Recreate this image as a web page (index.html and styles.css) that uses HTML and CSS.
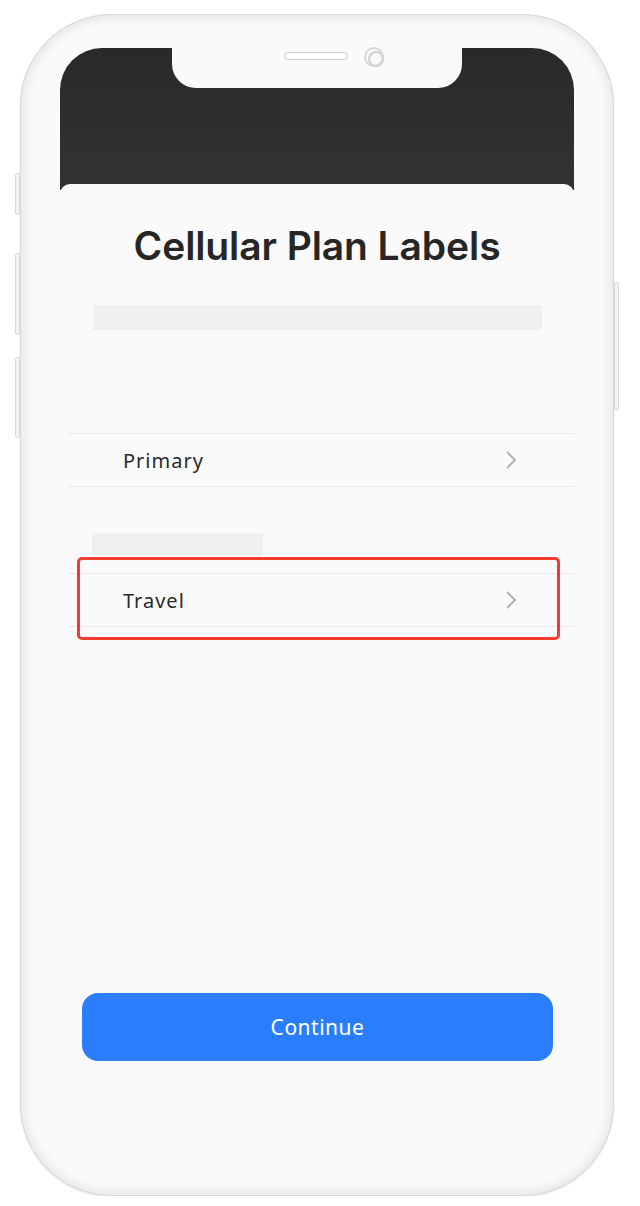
FILE: index.html
```html
<!DOCTYPE html>
<html lang="en">
<head>
<meta charset="UTF-8">
<meta name="viewport" content="width=device-width, initial-scale=1.0">
<title>Cellular Plan Labels</title>
<link rel="stylesheet" href="styles.css">
</head>
<body>
<div class="phone">
  <span class="side-btn btn-mute"></span>
  <span class="side-btn btn-vol-up"></span>
  <span class="side-btn btn-vol-down"></span>
  <span class="side-btn btn-power"></span>
  <span class="speaker"></span>
  <span class="camera"></span>

  <div class="screen">
    <div class="status-area">
      <div class="notch"></div>
    </div>

    <div class="sheet">
      <h1 class="title">Cellular Plan Labels</h1>
      <div class="placeholder wide"></div>

      <div class="row first">
        <span class="row-label">Primary</span>
        <svg class="chevron" width="12" height="20" viewBox="0 0 12 20"><polyline points="2,2 10,10 2,18" /></svg>
      </div>

      <div class="placeholder short"></div>

      <div class="row highlighted">
        <span class="row-label">Travel</span>
        <svg class="chevron" width="12" height="20" viewBox="0 0 12 20"><polyline points="2,2 10,10 2,18" /></svg>
        <span class="highlight-box"></span>
      </div>

      <button class="continue-btn" type="button">Continue</button>
    </div>
  </div>
</div>
</body>
</html>
```

FILE: styles.css
```css
* {
  padding: 0;
  margin: 0;
  box-sizing: border-box;
}
body {
  background-color: white;
  font-family: "Noto Sans", "Open Sans", sans-serif;
}
.phone {
  position: relative;
  width: 594px;
  height: 1182px;
  margin: 14px 0 0 20px;
  padding: 34px 40px 0;
  border-radius: 92px;
  background-color: #fafafa;
  box-shadow: inset 0 0 0 1px #d8d8d8, inset 0 0 7px 6px #ebebeb, 0 1px 2px rgba(0, 0, 0, 0.12);
}

/* hardware bits sitting on the frame */
.side-btn {
  position: absolute;
  width: 5px;
  background-color: #f3f3f3;
  border: 1px solid #dadada;
  border-radius: 2px;
}
.btn-mute { left: -5px; top: 159px; height: 42px; }
.btn-vol-up { left: -5px; top: 239px; height: 82px; }
.btn-vol-down { left: -5px; top: 343px; height: 81px; }
.btn-power { right: -5px; top: 268px; height: 128px; }
.speaker {
  position: absolute;
  z-index: 1;
  left: 264px;
  top: 38px;
  width: 64px;
  height: 8px;
  border: 1px solid #cfcfcf;
  border-radius: 4px;
  background-color: #fdfdfd;
}
.camera {
  position: absolute;
  z-index: 1;
  left: 344px;
  top: 33px;
  width: 20px;
  height: 20px;
  border: 2px solid #d6d6d6;
  border-radius: 50%;
  background-color: #fafafa;
}
.camera::after {
  content: "";
  position: absolute;
  left: 2px;
  top: 2px;
  width: 12px;
  height: 12px;
  border: 2px solid #d0d0d0;
  border-radius: 50%;
}

.screen {
  height: 1112px;
  border-radius: 42px 42px 0 0;
  background-color: #fafafa;
  overflow: hidden;
}
.status-area {
  position: relative;
  height: 142px;
  background: linear-gradient(#292929, #333333);
}
.notch {
  position: absolute;
  left: 112px;
  top: 0;
  width: 290px;
  height: 40px;
  background-color: #fafafa;
  border-radius: 0 0 24px 24px;
}
.sheet {
  position: relative;
  margin-top: -6px;
  height: 976px;
  padding-top: 40px;
  border-radius: 10px 10px 0 0;
  background-color: #fafafa;
}
.title {
  font-family: Inter, "Liberation Sans", sans-serif;
  font-weight: 600;
  font-size: 39px;
  line-height: 44px;
  letter-spacing: -0.1px;
  text-align: center;
  color: #262626;
}
.placeholder {
  background-color: #f0f0f0;
}
.placeholder.wide {
  width: 449px;
  height: 25px;
  margin: 37px 0 0 33px;
}
.placeholder.short {
  width: 171px;
  height: 23px;
  margin: 46px 0 0 32px;
}
.row {
  position: relative;
  display: flex;
  align-items: center;
  justify-content: space-between;
  height: 54px;
  margin-left: 8px;
  padding: 0 57px 0 55px;
  border-top: 1px solid #e9e9e9;
  border-bottom: 1px solid #e9e9e9;
}
.row.first {
  margin-top: 103px;
}
.row.highlighted {
  margin-top: 17px;
}
.row-label {
  font-size: 20px;
  letter-spacing: 1px;
  color: #2a2a2a;
}
.chevron polyline {
  fill: none;
  stroke: #b3b3b3;
  stroke-width: 2;
}
.highlight-box {
  position: absolute;
  top: -17px;
  left: 9px;
  right: 14px;
  bottom: -14px;
  border: 3px solid #f43b30;
  border-radius: 5px;
}
.continue-btn {
  display: block;
  width: 471px;
  height: 68px;
  margin: 366px 0 0 22px;
  border: none;
  border-radius: 16px;
  background-color: #2a7dfd;
  color: white;
  font-family: "Noto Sans", "Open Sans", sans-serif;
  font-size: 21px;
  letter-spacing: 0.5px;
}
```
